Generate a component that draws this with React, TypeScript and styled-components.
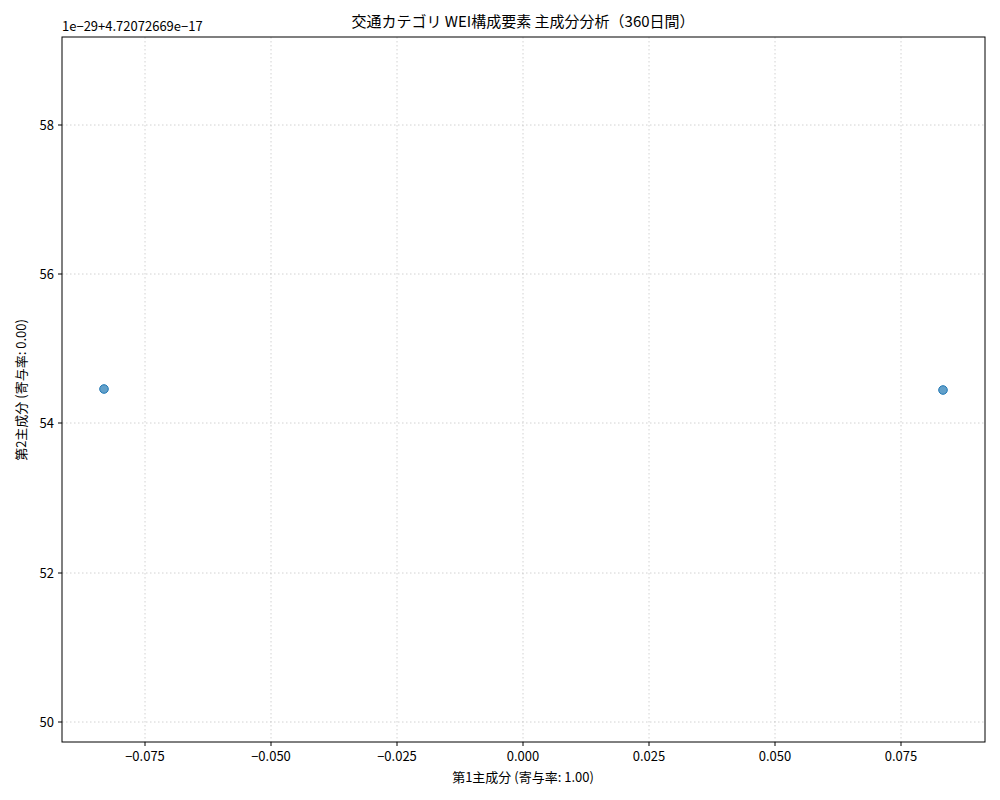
import React from 'react';
import styled, { createGlobalStyle } from 'styled-components';

const GlobalStyle = createGlobalStyle`
    html, body { margin: 0; padding: 0; background: #fff; }
    body { font-family: "Noto Sans CJK JP", "Noto Sans", sans-serif; }
`;

const Figure = styled.div`
    width: 1000px;
    height: 800px;
    background: #fff;
    svg {
        display: block;
        font-family: "Noto Sans CJK JP", "Noto Sans", sans-serif;
    }
`;

const L = 62, R = 985, T = 37, B = 742;
const xTicks = [
    { x: 145, t: '−0.075' }, { x: 271, t: '−0.050' }, { x: 397, t: '−0.025' },
    { x: 523, t: '0.000' }, { x: 649, t: '0.025' }, { x: 775, t: '0.050' }, { x: 901, t: '0.075' },
];
const yTicks = [
    { y: 125, t: '58' }, { y: 274, t: '56' }, { y: 423, t: '54' }, { y: 573, t: '52' }, { y: 722, t: '50' },
];
const points = [{ x: 104, y: 389 }, { x: 943, y: 390 }];

const App = () => (
    <Figure>
        <GlobalStyle />
        <svg width={1000} height={800} viewBox='0 0 1000 800'>
            {xTicks.map(({ x }) => (
                <line key={`gx${x}`} x1={x} x2={x} y1={T} y2={B} stroke='#b0b0b0' strokeWidth={0.8} strokeDasharray='1.5 2.5' opacity={0.7} />
            ))}
            {yTicks.map(({ y }) => (
                <line key={`gy${y}`} x1={L} x2={R} y1={y} y2={y} stroke='#b0b0b0' strokeWidth={0.8} strokeDasharray='1.5 2.5' opacity={0.7} />
            ))}
            {points.map(({ x, y }) => (
                <circle key={`p${x}`} cx={x} cy={y} r={4.3} fill='#1f77b4' fillOpacity={0.7} stroke='#1f77b4' strokeWidth={1} />
            ))}
            <rect x={L} y={T} width={R - L} height={B - T} fill='none' stroke='#000' strokeWidth={1} />
            {xTicks.map(({ x, t }) => (
                <g key={`tx${x}`}>
                    <line x1={x} x2={x} y1={B} y2={B + 4} stroke='#000' />
                    <text x={x} y={B + 19} fontSize={13} textAnchor='middle' fill='#000'>{t}</text>
                </g>
            ))}
            {yTicks.map(({ y, t }) => (
                <g key={`ty${y}`}>
                    <line x1={L - 4} x2={L} y1={y} y2={y} stroke='#000' />
                    <text x={L - 8} y={y + 5} fontSize={13} textAnchor='end' fill='#000'>{t}</text>
                </g>
            ))}
            <text x={L} y={31} fontSize={13} fill='#000'>1e−29+4.72072669e−17</text>
            <text x={523} y={27} fontSize={15} textAnchor='middle' fill='#000'>交通カテゴリ WEI構成要素 主成分分析（360日間）</text>
            <text x={523} y={782} fontSize={13} textAnchor='middle' fill='#000'>第1主成分 (寄与率: 1.00)</text>
            <text x={26} y={390} fontSize={13} textAnchor='middle' fill='#000' transform='rotate(-90 26 390)'>第2主成分 (寄与率: 0.00)</text>
        </svg>
    </Figure>
);

export default App;
